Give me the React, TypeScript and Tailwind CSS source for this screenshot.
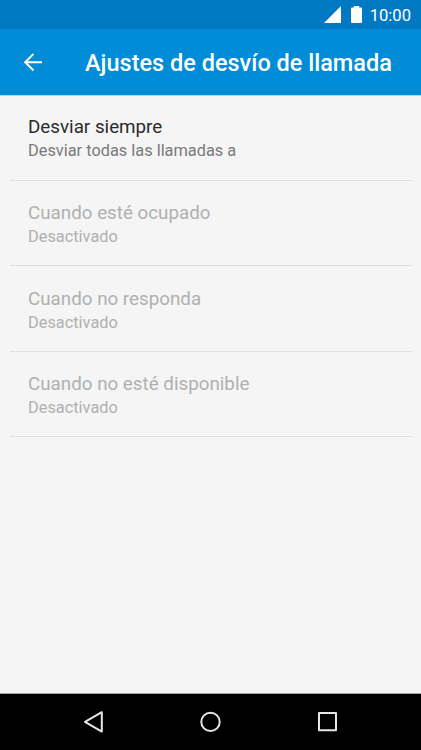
import { clsx } from "clsx"

interface ForwardingOption {
  title: string
  summary: string
  enabled: boolean
}

const options: ForwardingOption[] = [
  { title: "Desviar siempre", summary: "Desviar todas las llamadas a", enabled: true },
  { title: "Cuando esté ocupado", summary: "Desactivado", enabled: false },
  { title: "Cuando no responda", summary: "Desactivado", enabled: false },
  { title: "Cuando no esté disponible", summary: "Desactivado", enabled: false },
]

function StatusBar() {
  return (
    <div className="flex h-[29px] shrink-0 items-center justify-end bg-[#0079c2] pr-[10px] text-white">
      <svg width="17" height="17" viewBox="0 0 17 17" fill="currentColor" className="mr-[10px]">
        <path d="M17 0v17H0z" />
      </svg>
      <svg width="11" height="17" viewBox="0 0 11 17" fill="currentColor" className="mr-2">
        <path d="M2.8 0h5.4v1.5H10a1 1 0 0 1 1 1V16a1 1 0 0 1-1 1H1a1 1 0 0 1-1-1V2.5a1 1 0 0 1 1-1h1.8z" />
      </svg>
      <span className="pt-[3px] text-[16.6px] leading-none">10:00</span>
    </div>
  )
}

function Header() {
  return (
    <header className="flex h-[67px] shrink-0 items-center border-b border-[#b5daf0] bg-[#008cd6] pl-[23px] text-white">
      <button type="button" aria-label="Atrás" className="mr-[43px]">
        <svg width="19" height="19" viewBox="0 0 19 19" fill="none" stroke="currentColor" strokeWidth="2">
          <path d="M19 9.2H2.4M10.5 .9 2.2 9.2l8.3 8.3" />
        </svg>
      </button>
      <h1 className="pt-[4px] text-[23.5px] leading-none font-medium whitespace-nowrap">Ajustes de desvío de llamada</h1>
    </header>
  )
}

function OptionRow({ option }: { option: ForwardingOption }) {
  return (
    <li
      className={clsx(
        "flex h-[85.6px] flex-col justify-center border-b border-[#e0e0e0] px-[18px] pt-[4.3px]",
        option.enabled ? "text-[#2b2b2b]" : "text-[#b0b0b0]",
      )}
    >
      <span className="text-[18.8px] leading-6">{option.title}</span>
      <span className={clsx("text-[16.35px] leading-6", option.enabled && "text-[#7a7a7a]")}>{option.summary}</span>
    </li>
  )
}

function NavigationBar() {
  return (
    <nav className="flex h-[57px] shrink-0 items-center justify-center gap-[97px] border-t border-[#a3a3a3] bg-black text-[#e6e6e6]">
      <svg width="20" height="22" viewBox="0 0 20 22" fill="none" stroke="currentColor" strokeWidth="2" strokeLinejoin="round">
        <path d="M17.8 1.2v19.4L1 10.9z" />
      </svg>
      <svg width="20" height="20" viewBox="0 0 20 20" fill="none" stroke="currentColor" strokeWidth="2" overflow="visible">
        <circle cx="9.5" cy="9.9" r="9.2" />
      </svg>
      <svg width="20" height="20" viewBox="0 0 20 20" fill="none" stroke="currentColor" strokeWidth="2" strokeLinejoin="round">
        <path d="M1 1.1h17v17.2h-17z" />
      </svg>
    </nav>
  )
}

export default function App() {
  return (
    <div className="flex h-screen flex-col overflow-hidden bg-[#f5f5f5] font-[Roboto,sans-serif]">
      <StatusBar />
      <Header />
      <ul className="-mt-px flex-1 pr-[9px] pl-[10px]">
        {options.map((option) => (
          <OptionRow key={option.title} option={option} />
        ))}
      </ul>
      <NavigationBar />
    </div>
  )
}
